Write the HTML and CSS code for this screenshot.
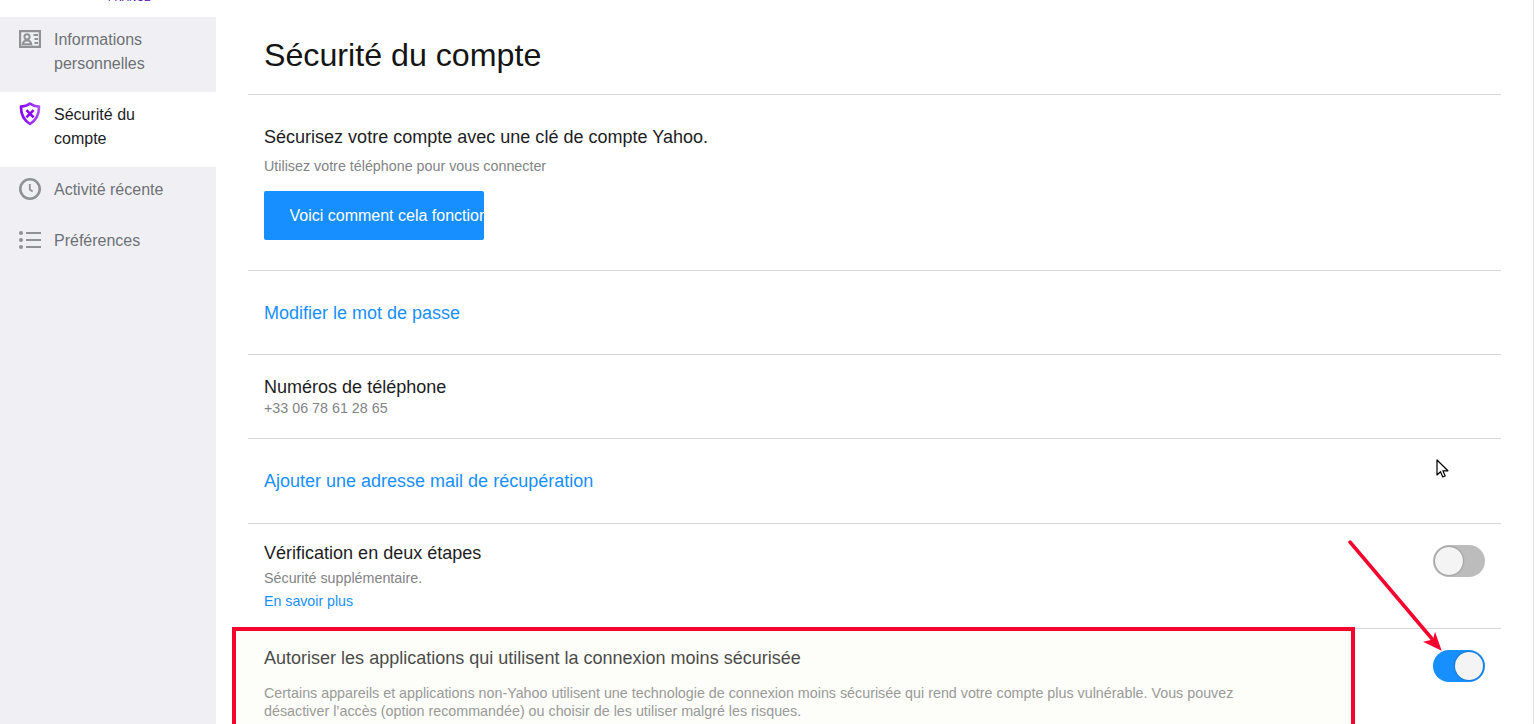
FILE: index.html
```html
<!DOCTYPE html>
<html lang="fr">
<head>
<meta charset="utf-8">
<title>Sécurité du compte</title>
<link rel="stylesheet" href="styles.css">
</head>
<body>
<div class="page">
  <aside class="sidebar">
    <div class="brand"><span class="brand-text">FRANCE</span></div>
    <nav class="nav">
      <a class="nav-item two">
        <svg class="icon" viewBox="0 0 22 18"><path fill="#8f9196" fill-rule="evenodd" d="M0 0h22v18H0zM2.200 2.200v13.600h17.600V2.200z"/><circle cx="8" cy="6.800" r="2.600" fill="none" stroke="#8f9196" stroke-width="2"/><path fill="none" stroke="#8f9196" stroke-width="2" d="M3.700 14.300c.3-2.700 2-3.800 4.300-3.800s4 1.100 4.300 3.800z"/><path stroke="#8f9196" stroke-width="2" d="M14.500 5H19M15.500 9H19M15.500 13H19"/></svg>
        <span>Informations personnelles</span>
      </a>
      <a class="nav-item two active">
        <svg class="icon shield" viewBox="0 0 22 24"><defs><linearGradient id="sg" x1="0" x2="1" y1="0" y2="0"><stop offset="0" stop-color="#8500f2"/><stop offset="1" stop-color="#ab4cff"/></linearGradient></defs><path fill="none" stroke="url(#sg)" stroke-width="2.600" stroke-linejoin="round" d="M11 1.600c2.600 1.900 5.500 2.800 9 3 .2 7.600-2.300 13.400-9 17.400C4.300 18 1.800 12.200 2 4.600c3.500-.2 6.400-1.100 9-3z"/><path fill="none" stroke="#8b00f5" stroke-width="2.600" d="M7.400 8.100l7.200 7.200M14.600 8.100l-7.200 7.200"/></svg>
        <span>Sécurité du compte</span>
      </a>
      <a class="nav-item">
        <svg class="icon clock" viewBox="0 0 22 22"><circle cx="11" cy="11" r="9.700" fill="none" stroke="#8f9196" stroke-width="2.600"/><path fill="none" stroke="#8f9196" stroke-width="1.800" d="M10.800 6v5.500l2.800 2"/></svg>
        <span>Activité récente</span>
      </a>
      <a class="nav-item">
        <svg class="icon" viewBox="0 0 22 18"><g fill="#8f9196"><circle cx="2" cy="2" r="2"/><circle cx="2" cy="9" r="2"/><circle cx="2" cy="16" r="2"/><rect x="7" y="1" width="15" height="2"/><rect x="7" y="8" width="15" height="2"/><rect x="7" y="15" width="15" height="2"/></g></svg>
        <span>Préférences</span>
      </a>
    </nav>
  </aside>
  <main class="main">
    <h1 class="title">Sécurité du compte</h1>
    <section class="row key-row">
      <h2 class="row-head">Sécurisez votre compte avec une clé de compte Yahoo.</h2>
      <p class="sub key-sub">Utilisez votre téléphone pour vous connecter</p>
      <a class="btn"><span>Voici comment cela fonctionne</span></a>
    </section>
    <section class="row link-row pw"><a class="big-link">Modifier le mot de passe</a></section>
    <section class="row phone-row">
      <h2 class="row-head">Numéros de téléphone</h2>
      <p class="sub">+33 06 78 61 28 65</p>
    </section>
    <section class="row link-row mail"><a class="big-link">Ajouter une adresse mail de récupération</a></section>
    <section class="row two-step">
      <div>
        <h2 class="row-head">Vérification en deux étapes</h2>
        <p class="sub ts-sub">Sécurité supplémentaire.</p>
        <a class="small-link">En savoir plus</a>
      </div>
      <span class="toggle off"><i class="knob"></i></span>
    </section>
    <section class="row less-secure">
      <div class="ls-text">
        <h2 class="row-head">Autoriser les applications qui utilisent la connexion moins sécurisée</h2>
        <p class="sub ls-sub">Certains appareils et applications non-Yahoo utilisent une technologie de connexion moins sécurisée qui rend votre compte plus vulnérable. Vous pouvez désactiver l’accès (option recommandée) ou choisir de les utiliser malgré les risques.</p>
      </div>
      <span class="toggle on"><i class="knob"></i></span>
    </section>
  </main>
</div>
<div class="highlight"></div>
<svg class="arrow" viewBox="0 0 100 130"><path d="M2 2L85 100" fill="none" stroke="#f5052e" stroke-width="3.500" stroke-linecap="round"/><path d="M93.700 110.700L75 101.700L85 99.500L87 91.700z" fill="#f5052e"/></svg>
<svg class="cursor" viewBox="0 0 14 20"><path d="M1 1v15l3.500-3.300 2.300 5.300 2.400-1-2.300-5.200h5z" fill="#fff" stroke="#000" stroke-width="1.200" stroke-linejoin="round"/></svg>
</body>
</html>
```
FILE: styles.css
```css
* { box-sizing: border-box; }
html, body { margin: 0; height: 100%; overflow: hidden; background: #fff; }
body { font-family: "Liberation Sans", Arial, sans-serif; color: #1d1d1f; position: relative; }
.page { display: flex; height: 724px; border-right: 1px solid #e2e2e2; }
.sidebar { width: 216px; flex: none; display: flex; flex-direction: column; }
.brand { height: 17px; position: relative; overflow: hidden; }
.brand-text { position: absolute; left: 108px; top: -8px; font-size: 10px; line-height: 12px; color: #4d00ae; letter-spacing: .3px; }
.nav { flex: 1; background: #f0f0f4; }
.nav-item { display: flex; align-items: flex-start; height: 51px; padding: 11px 40px 0 19px; font-size: 16px; line-height: 24px; color: #6e7076; }
.nav-item.two { height: 75px; }
.nav-item.active { background: #fff; color: #1d1d1f; }
.icon { width: 22px; height: 18px; flex: none; margin: 2px 13px 0 0; }
.icon.shield { height: 24px; margin-top: -1px; }
.icon.clock { height: 22px; margin-top: 0; }
.main { flex: 1; padding: 0 32px; min-width: 0; }
.title { margin: 0; height: 95px; padding: 37px 16px 0; font-size: 32.200px; line-height: 36px; font-weight: 400; color: #141414; border-bottom: 1px solid #d6d6d6; }
.row { padding: 0 16px; border-bottom: 1px solid #d6d6d6; }
.row-head { margin: 0; font-size: 18.030px; line-height: 22px; font-weight: 400; color: #1d1d1f; }
.sub { margin: 0; font-size: 14.300px; line-height: 18px; color: #828487; }
.key-row { height: 176px; padding-top: 31px; }
.key-sub { margin-top: 9px; }
.btn { display: block; width: 220px; height: 49px; margin-top: 16px; padding: 0 0 0 25.500px; background: #188fff; border-radius: 2px; color: #fff; font-size: 16px; line-height: 49px; white-space: nowrap; overflow: hidden; }
.btn span { display: block; width: 194.500px; overflow: hidden; }
.link-row { display: flex; align-items: center; }
.pw { height: 84px; padding-top: 2px; }
.mail { height: 85px; }
.big-link { font-size: 18px; color: #188fff; }
.phone-row { height: 84px; padding-top: 21px; }
.phone-row .sub { line-height: 20px; }
.two-step { height: 105px; padding-top: 18px; display: flex; justify-content: space-between; align-items: flex-start; }
.ts-sub { margin-top: 5px; }
.small-link { display: block; margin-top: 5px; font-size: 14.200px; line-height: 18px; color: #188fff; }
.toggle { display: block; flex: none; width: 52px; height: 32px; border-radius: 16px; padding: 2px; }
.toggle.off { background: #bcbcbd; margin: 3px 0 0; }
.toggle.on { background: #188fff; margin: 3px 0 0; padding-left: 22px; }
.knob { display: block; width: 28px; height: 28px; border-radius: 50%; background: #f4f4f5; box-shadow: 0 0 2px rgba(0,0,0,.45); }
.less-secure { display: flex; justify-content: space-between; align-items: flex-start; border-bottom: 0; height: 96px; padding-top: 18px; }
.ls-text { width: 985px; }
.ls-sub { margin-top: 15px; }
.highlight { position: absolute; left: 232px; top: 627px; width: 1123px; height: 120px; border: 4px solid #f5052e; background: rgba(245,245,225,.2); }
.arrow { position: absolute; left: 1348px; top: 540px; width: 100px; height: 130px; }
.cursor { position: absolute; left: 1436px; top: 459px; width: 14px; height: 20px; }
```
